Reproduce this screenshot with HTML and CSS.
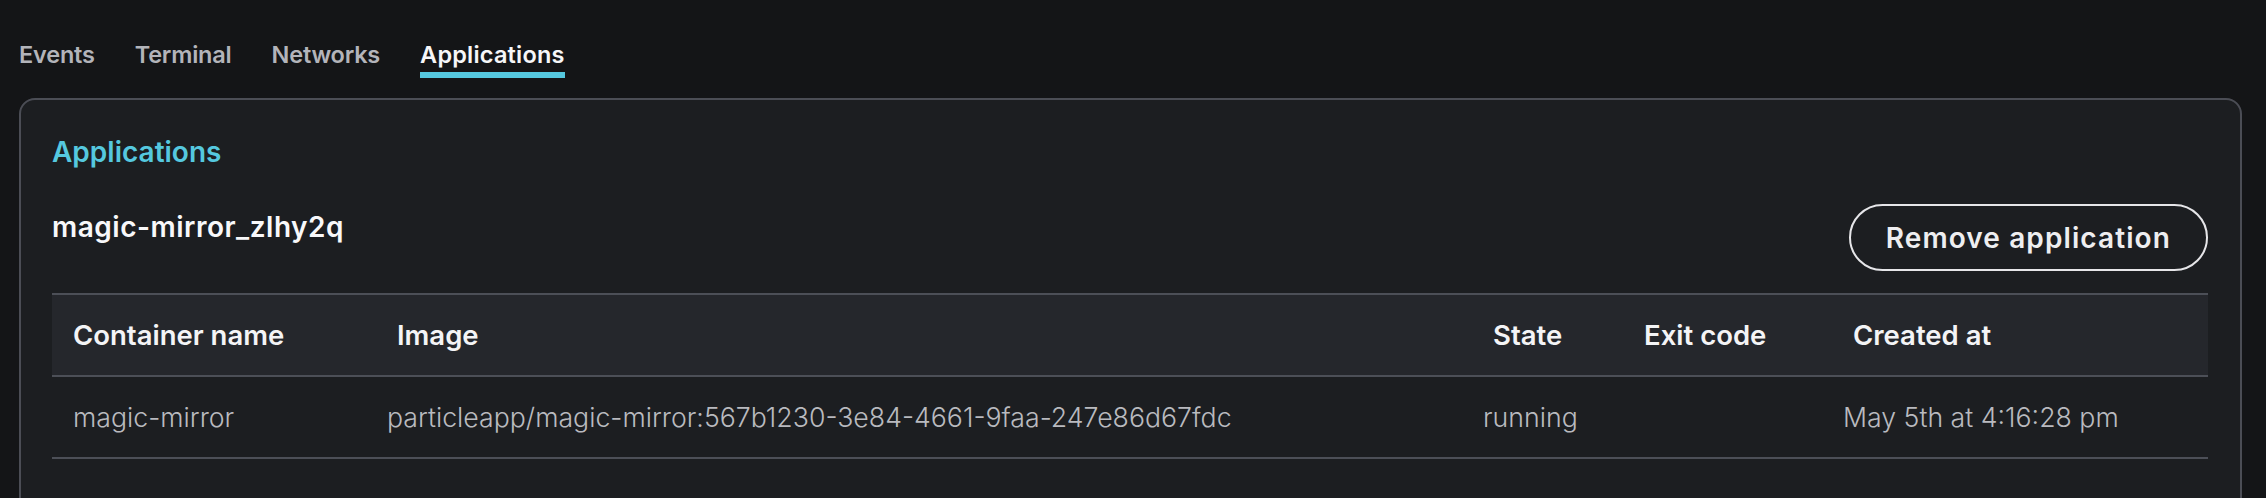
FILE: index.html
```html
<!DOCTYPE html>
<html lang="en">
<head>
<meta charset="utf-8">
<title>Applications</title>
<link rel="stylesheet" href="styles.css">
</head>
<body>
<div class="page">
  <nav class="tabs">
    <a class="tab">Events</a>
    <a class="tab">Terminal</a>
    <a class="tab">Networks</a>
    <a class="tab active">Applications</a>
  </nav>
  <section class="card">
    <h2 class="card-title">Applications</h2>
    <div class="app-row">
      <h3 class="app-name">magic-mirror_zlhy2q</h3>
      <button class="btn-outline">Remove application</button>
    </div>
    <table class="containers">
      <colgroup>
        <col class="c-name">
        <col class="c-image">
        <col class="c-state">
        <col class="c-exit">
        <col class="c-created">
      </colgroup>
      <thead>
        <tr>
          <th class="first">Container name</th>
          <th>Image</th>
          <th>State</th>
          <th>Exit code</th>
          <th>Created at</th>
        </tr>
      </thead>
      <tbody>
        <tr>
          <td class="first">magic-mirror</td>
          <td>particleapp/magic-mirror:567b1230-3e84-4661-9faa-247e86d67fdc</td>
          <td>running</td>
          <td></td>
          <td>May 5th at 4:16:28 pm</td>
        </tr>
      </tbody>
    </table>
  </section>
</div>
</body>
</html>
```

FILE: styles.css
```css
* { box-sizing: border-box; }

html, body {
  margin: 0;
  padding: 0;
  background: #141517;
  font-family: "Inter", "Liberation Sans", sans-serif;
  color: #f2f2f4;
  overflow: hidden;
}

.page {
  padding: 39px 24px 0 19px;
}

.tabs {
  display: flex;
  gap: 40px;
}

.tab {
  font-size: 23.5px;
  line-height: 32px;
  font-weight: 600;
  color: #b3b4ba;
  padding-bottom: 1px;
  border-bottom: 6px solid transparent;
  letter-spacing: -0.2px;
}

.tab.active {
  color: #f6f6f8;
  border-bottom-color: #55c8df;
  letter-spacing: 0.2px;
}

.card {
  margin-top: 20px;
  background: #1c1e21;
  border: 2px solid #4b4d55;
  border-radius: 16px;
  padding: 34px 32px 60px 31px;
  height: 420px;
}

.card-title {
  margin: 0;
  font-size: 28px;
  line-height: 36px;
  font-weight: 600;
  color: #55c8df;
}

.app-row {
  margin-top: 34px;
  display: flex;
  justify-content: space-between;
  align-items: flex-start;
}

.app-name {
  margin: 5px 0 0 0;
  font-size: 28px;
  line-height: 36px;
  font-weight: 600;
  color: #f8f8fa;
  letter-spacing: 0.5px;
}

.btn-outline {
  height: 67px;
  padding: 0 35px;
  background: transparent;
  border: 2px solid #e6e6e9;
  border-radius: 34px;
  color: #eeeef0;
  font-family: inherit;
  font-size: 28px;
  font-weight: 600;
  letter-spacing: 1.1px;
}

.containers {
  margin-top: 22px;
  width: 100%;
  border-collapse: separate;
  border-spacing: 0;
  table-layout: fixed;
}

.c-name { width: 325px; }
.c-image { width: 1096px; }
.c-state { width: 151px; }
.c-exit { width: 209px; }
.c-created { width: auto; }

.containers th {
  background: #25272c;
  border-top: 2px solid #4c4f57;
  border-bottom: 2px solid #4c4f57;
  text-align: left;
  font-size: 27.5px;
  line-height: 32px;
  font-weight: 600;
  color: #f4f4f6;
  padding: 24px 0 24px 20px;
  white-space: nowrap;
}

.containers td {
  border-bottom: 2px solid #4c4f57;
  font-size: 26.7px;
  line-height: 32px;
  font-weight: 300;
  color: #b9babf;
  padding: 24px 0 24px 10px;
  white-space: nowrap;
}

.containers th.first,
.containers td.first {
  padding-left: 21px;
}
```
